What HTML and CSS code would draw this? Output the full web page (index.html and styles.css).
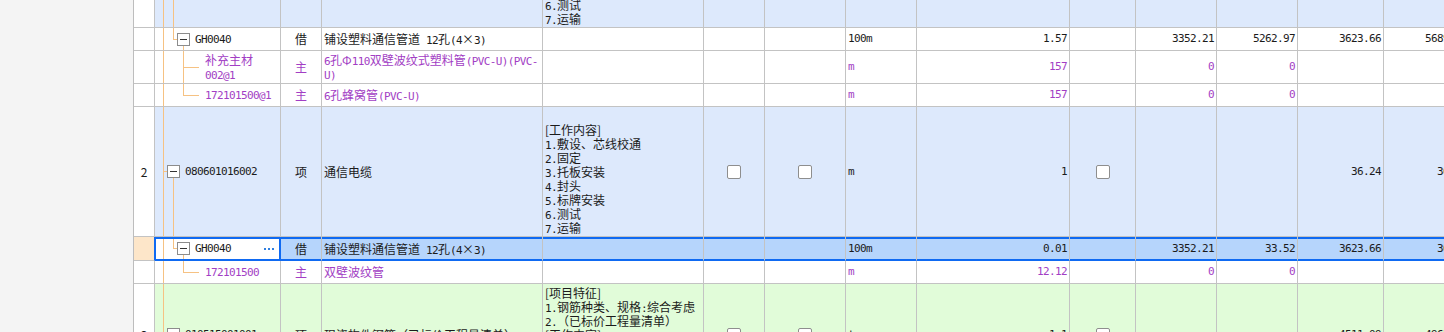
FILE: index.html
```html
<!DOCTYPE html>
<html lang="zh">
<head>
<meta charset="utf-8">
<title>分部分项清单</title>
<link rel="stylesheet" href="styles.css">
</head>
<body>
<div class="wrap">
  <div class="side"></div>
  <div class="sheet">
    <table class="grid">
      <colgroup>
        <col class="w-rn"><col class="w-tree"><col class="w-type"><col class="w-name"><col class="w-feat"><col class="w-c6"><col class="w-c7"><col class="w-unit"><col class="w-qty"><col class="w-c10"><col class="w-c11"><col class="w-c12"><col class="w-c13"><col class="w-c14">
      </colgroup>
      <tbody>
        <tr class="h-item blue">
          <td class="rn">1</td>
          <td class="tree t-item"><div class="node"><span class="box"></span><span class="a">080601005001</span></div></td>
          <td class="type">项</td>
          <td class="name">敷设塑料通信管道</td>
          <td class="feat"><br>[工作内容]<br><span class="a">1.</span>检查、清理管孔<br><span class="a">2.</span>清刷管孔<br><span class="a">3.</span>敷设管道<br><span class="a">4.</span>接头<br><span class="a">5.</span>封堵<br><span class="a">6.</span>测试<br><span class="a">7.</span>运输</td>
          <td class="c"><span class="cb"></span></td>
          <td class="c"><span class="cb"></span></td>
          <td class="lat">m</td>
          <td class="num">1</td>
          <td class="c"><span class="cb"></span></td>
          <td class="num"></td>
          <td class="num"></td>
          <td class="num"></td>
          <td class="num"></td>
        </tr>
        <tr class="h-one">
          <td class="rn"></td>
          <td class="tree t-sub"><div class="node"><span class="box"></span><span class="a">GH0040</span></div></td>
          <td class="type">借</td>
          <td class="name">铺设塑料通信管道<span class="a"> 12</span>孔<span class="a">(4</span>×<span class="a">3)</span></td>
          <td></td>
          <td></td>
          <td></td>
          <td class="lat">100m</td>
          <td class="num">1.57</td>
          <td class="num"></td>
          <td class="num">3352.21</td>
          <td class="num">5262.97</td>
          <td class="num">3623.66</td>
          <td class="num">5689.15</td>
        </tr>
        <tr class="h-two mat">
          <td class="rn"></td>
          <td class="tree t-leaf"><div class="node"><span>补充主材<br><span class="a">002@1</span></span></div></td>
          <td class="type">主</td>
          <td class="name"><span class="a">6</span>孔Φ<span class="a">110</span>双壁波纹式塑料管<span class="a">(PVC-U)(PVC-</span><br><span class="a">U)</span></td>
          <td></td>
          <td></td>
          <td></td>
          <td class="lat">m</td>
          <td class="num">157</td>
          <td class="num"></td>
          <td class="num">0</td>
          <td class="num">0</td>
          <td class="num"></td>
          <td class="num"></td>
        </tr>
        <tr class="h-one mat">
          <td class="rn"></td>
          <td class="tree t-leaf last"><div class="node"><span class="a">172101500@1</span></div></td>
          <td class="type">主</td>
          <td class="name"><span class="a">6</span>孔蜂窝管<span class="a">(PVC-U)</span></td>
          <td></td>
          <td></td>
          <td></td>
          <td class="lat">m</td>
          <td class="num">157</td>
          <td class="num"></td>
          <td class="num">0</td>
          <td class="num">0</td>
          <td class="num"></td>
          <td class="num"></td>
        </tr>
        <tr class="h-item blue">
          <td class="rn">2</td>
          <td class="tree t-item"><div class="node"><span class="box"></span><span class="a">080601016002</span></div></td>
          <td class="type">项</td>
          <td class="name">通信电缆</td>
          <td class="feat"><br>[工作内容]<br><span class="a">1.</span>敷设、芯线校通<br><span class="a">2.</span>固定<br><span class="a">3.</span>托板安装<br><span class="a">4.</span>封头<br><span class="a">5.</span>标牌安装<br><span class="a">6.</span>测试<br><span class="a">7.</span>运输</td>
          <td class="c"><span class="cb"></span></td>
          <td class="c"><span class="cb"></span></td>
          <td class="lat">m</td>
          <td class="num">1</td>
          <td class="c"><span class="cb"></span></td>
          <td class="num"></td>
          <td class="num"></td>
          <td class="num">36.24</td>
          <td class="num">36.24</td>
        </tr>
        <tr class="h-sel sel">
          <td class="rn"></td>
          <td class="tree t-sub"><div class="node"><span class="box"></span><span class="a">GH0040</span><span class="more"></span></div></td>
          <td class="type">借</td>
          <td class="name">铺设塑料通信管道<span class="a"> 12</span>孔<span class="a">(4</span>×<span class="a">3)</span></td>
          <td></td>
          <td></td>
          <td></td>
          <td class="lat">100m</td>
          <td class="num">0.01</td>
          <td class="num"></td>
          <td class="num">3352.21</td>
          <td class="num">33.52</td>
          <td class="num">3623.66</td>
          <td class="num">36.24</td>
        </tr>
        <tr class="h-one mat">
          <td class="rn"></td>
          <td class="tree t-leaf last"><div class="node"><span class="a">172101500</span></div></td>
          <td class="type">主</td>
          <td class="name">双壁波纹管</td>
          <td></td>
          <td></td>
          <td></td>
          <td class="lat">m</td>
          <td class="num">12.12</td>
          <td class="num"></td>
          <td class="num">0</td>
          <td class="num">0</td>
          <td class="num"></td>
          <td class="num"></td>
        </tr>
        <tr class="h-green green">
          <td class="rn">3</td>
          <td class="tree t-item"><div class="node"><span class="box"></span><span class="a">010515001001</span></div></td>
          <td class="type">项</td>
          <td class="name">现浇构件钢筋（已标价工程量清单）</td>
          <td class="feat">[项目特征]<br><span class="a">1.</span>钢筋种类、规格<span class="a">:</span>综合考虑<br><span class="a">2.</span>（已标价工程量清单）<br>[工作内容]<br><span class="a">1.</span>钢筋制作、运输<br><span class="a">2.</span>钢筋安装<br><span class="a">3.</span>焊接<span class="a">(</span>绑扎<span class="a">)</span></td>
          <td class="c"><span class="cb"></span></td>
          <td class="c"><span class="cb"></span></td>
          <td class="lat">t</td>
          <td class="num">1.1</td>
          <td class="c"><span class="cb"></span></td>
          <td class="num"></td>
          <td class="num"></td>
          <td class="num">4511.09</td>
          <td class="num">4962.20</td>
        </tr>
      </tbody>
    </table>
  </div>
</div>
</body>
</html>
```

FILE: styles.css
```css
* { box-sizing: border-box; }
html, body { margin: 0; padding: 0; background: #ffffff; }
body { overflow: hidden; }

.wrap {
  display: flex;
  width: 1444px;
  height: 332px;
  overflow: hidden;
}
.side {
  flex: 0 0 133px;
  background: #f4f4f4;
}
.sheet { flex: 0 0 auto; }

.grid {
  border-collapse: separate;
  border-spacing: 0;
  table-layout: fixed;
  width: 1337px;
  margin-top: -102px;
  border-left: 1px solid #bdbdbd;
  font-family: "Noto Sans CJK SC", sans-serif;
  font-size: 12px;
  line-height: 14px;
  color: #1b1b1b;
}

.w-rn { width: 21px; }
.w-tree { width: 126px; }
.w-type { width: 41px; }
.w-name { width: 221px; }
.w-feat { width: 161px; }
.w-c6 { width: 61px; }
.w-c7 { width: 81px; }
.w-unit { width: 71px; }
.w-qty { width: 153px; }
.w-c10 { width: 66px; }
.w-c11 { width: 81px; }
.w-c12 { width: 81px; }
.w-c13 { width: 86px; }
.w-c14 { width: 86px; }

.grid td {
  padding: 0 2px;
  border-right: 1px solid #c3c3c3;
  border-bottom: 1px solid #c3c3c3;
  vertical-align: middle;
  white-space: nowrap;
  overflow: hidden;
}

.h-item { height: 130px; }
.h-one { height: 23px; }
.h-two { height: 33px; }
.h-sel { height: 24px; }
.h-green { height: 102px; }

/* Latin runs: half-width monospace like the original grid font */
.a, .grid td.num, .grid td.lat {
  font-family: "DejaVu Sans Mono", "Liberation Mono", monospace;
  font-size: 11px;
  letter-spacing: -0.62px;
}
span.a { line-height: 9px; }

.grid td.num { text-align: right; padding-right: 2px; }
.grid td.type { text-align: center; }
.grid td.c { text-align: center; }
.grid td.feat { vertical-align: top; padding-top: 2px; }
.grid td.rn { background-color: #ffffff; text-align: center; padding: 0; }

/* row colours */
.blue td { background-color: #dde9fc; }
.green td { background-color: #e1fcd9; }
.sel td { background-color: #b6d5fc; }
.mat td { color: #a23ec4; }

/* selected row */
.sel td {
  box-shadow: inset 0 2px #0f6af2, inset 0 -1px #0f6af2;
  border-bottom-color: #0f6af2;
}
.grid .sel td.rn {
  background-color: #fde6c9;
  box-shadow: none;
  border-bottom-color: #c3c3c3;
  border-right-color: #0f6af2;
}
.grid .sel td.tree {
  background-color: #ffffff;
  border-right-color: #0f6af2;
  box-shadow: inset 0 2px #0f6af2, inset 0 -1px #0f6af2, inset 1px 0 #0f6af2, inset -1px 0 #0f6af2;
  padding-right: 6px;
}

/* tree guides */
.tree {
  --o: #f6c283;
  background-repeat: no-repeat;
}
.grid td.t-item {
  padding-left: 12px;
  background-image: linear-gradient(var(--o), var(--o)), linear-gradient(var(--o), var(--o)), linear-gradient(var(--o), var(--o));
  background-position: 8px 0, 8px 50%, 18px 100%;
  background-size: 1px 100%, 4px 1px, 1px 50%;
}
.grid td.t-sub {
  padding-left: 22px;
  background-image: linear-gradient(var(--o), var(--o)), linear-gradient(var(--o), var(--o)), linear-gradient(var(--o), var(--o)), linear-gradient(var(--o), var(--o));
  background-position: 8px 0, 18px 0, 18px 50%, 28px 100%;
  background-size: 1px 100%, 1px 50%, 4px 1px, 1px 50%;
}
.grid td.t-leaf {
  padding-left: 50px;
  background-image: linear-gradient(var(--o), var(--o)), linear-gradient(var(--o), var(--o)), linear-gradient(var(--o), var(--o));
  background-position: 8px 0, 28px 0, 28px 50%;
  background-size: 1px 100%, 1px 100%, 16px 1px;
}
.grid td.t-leaf.last {
  background-size: 1px 100%, 1px 50%, 16px 1px;
}

.node {
  display: flex;
  align-items: center;
}
.box {
  flex: none;
  width: 13px;
  height: 13px;
  margin-right: 5px;
  border: 1px solid #8c8c8c;
  background: #ffffff linear-gradient(#333333, #333333) center / 7px 1px no-repeat;
}
.more {
  margin-left: auto;
  width: 10px;
  height: 2px;
  background: linear-gradient(90deg, #2f7fe0 0 2px, transparent 2px 4px) 0 0 / 4px 2px repeat-x;
}
.cb {
  display: inline-block;
  width: 14px;
  height: 14px;
  border: 1px solid #8e8e8e;
  border-radius: 2px;
  background: #ffffff;
  vertical-align: middle;
}
```
